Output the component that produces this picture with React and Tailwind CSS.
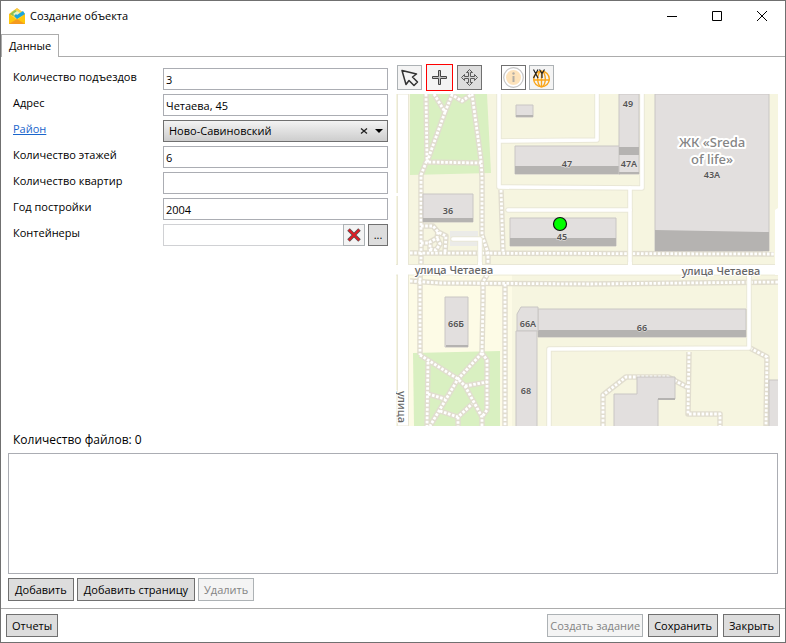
import React, { useState } from 'react';

const BUTTON = 'h-[23px] border border-[#707070] bg-[#dddddd] leading-5 whitespace-nowrap';
const BUTTON_OFF = 'h-[23px] border border-[#adb2b5] bg-[#f4f4f4] leading-5 whitespace-nowrap text-[#838383]';
const INPUT = 'h-[22px] w-full border border-[#abadb3] bg-white px-[2px] outline-none';

// Пешеходные дорожки
const footpaths = [
  'M426 94L427 160L421 175L421 262L420 280L420 355',
  'M434 94L445 112L452 95L462 101L472 94L481 160L482 177L482 235L488 253L488 265',
  'M445 112L427 162L481 163',
  'M487 275L483 282L483 300L482 353',
  'M410 253L774 254',
  'M410 281L440 283L590 284L778 282',
  'M501 190L503 252',
  'M505 284L505 426',
  'M421 226L433 226L438 232L446 236L445 252',
  'M438 232L437 238L430 242L430 249L436 250L440 244L437 238M421 243L430 243M430 249L431 253',
  'M420 355L458 379L465 386L482 417L482 426',
  'M482 353L458 379L430 426',
  'M428 362L427 426',
  'M482 353L487 360L487 410L482 417',
  'M465 386L487 382',
  'M428 394L445 399',
  'M440 411L458 417L472 404M458 417L458 426',
  'M603 426L603 395L626 377L668 377L687 387',
  'M689 352L688 414L720 414L720 426',
  'M750 348L767 357L766 426',
];

// Проезды
const roads = [
  'M499 94L499 187L642 188L642 94',
  'M499 141L597 140L597 94',
  'M630 188L630 267',
  'M508 210L630 210',
  'M453 239L480 239L480 267',
  'M749 272L749 348L549 349L549 426',
];

const buildings = [
  { d: 'M516 105H533V117H516Z', shade: 'M516 115H533V117H516Z' },
  { d: 'M515 146H620V174H515Z', shade: 'M515 166H620V174H515Z' },
  { d: 'M619 94H639V174H619Z', shade: 'M619 147H639V155H619ZM619 172H639V174H619Z' },
  { d: 'M655 94H769V251H655Z', shade: 'M655 230L769 232V251H655Z' },
  { d: 'M423 194H473V222H423Z', shade: 'M423 218H473V222H423Z' },
  { d: 'M510 218H616V246H510Z', shade: 'M510 238H616V246H510Z' },
  { d: 'M445 297H468V347H445Z', shade: 'M446 345H468V347H446Z' },
  { d: 'M538 309H746V337H538Z', shade: 'M538 330H746V337H538Z' },
  { d: 'M517 331V314L521 307H538V331Z' },
  { d: 'M516 331H537V428H516Z' },
  { d: 'M637 377H675V399H658V428H614V394H637Z', shade: 'M658 398H675V400H658Z' },
  { d: 'M769 380H780V428H769Z' },
];

const houseLabels = [
  { x: 628, y: 107, text: '49' },
  { x: 567, y: 167, text: '47' },
  { x: 629, y: 167, text: '47А' },
  { x: 712, y: 178, text: '43А' },
  { x: 448, y: 214, text: '36' },
  { x: 562, y: 240, text: '45' },
  { x: 456, y: 327, text: '66Б' },
  { x: 528, y: 327, text: '66А' },
  { x: 642, y: 331, text: '66' },
  { x: 526, y: 394, text: '68' },
];

function AppIcon() {
  return (
    <svg viewBox="0 0 16 16" className="size-4" aria-hidden="true">
      <path d="M0 6L8 0L16 6V16H0Z" fill="#f7b423" />
      <path d="M2 4L8 1L14 4V10L8 13L2 10Z" fill="#fdd94b" />
      <path d="M1 6L6 2L9 4L4 8Z" fill="#8cc152" />
      <path d="M4 6L8 3L11 5L7 8Z" fill="#e8f3c8" />
      <path d="M0 6L8 12L16 6V16H0Z" fill="#fdc70c" />
      <path d="M0 16L8 11L16 16Z" fill="#f59a1f" />
      <path d="M5 8L7 6L8 7L14 3L16 6L8 11Z" fill="#1ba5dc" />
    </svg>
  );
}

function CityMap() {
  return (
    <svg viewBox="396 94 382 332" className="block w-full" role="img" aria-label="Карта">
      <rect x="396" y="94" width="382" height="332" fill="#f6f5e0" />
      <path d="M409 275H512V426H409Z" fill="#fdfbe6" />
      <path d="M410 94H487L491 173L410 175Z" fill="#d9f0c1" />
      <path d="M413 353L500 351V426H414Z" fill="#d9f0c1" />
      <path d="M450 231H478V246H450Z" fill="#ebebe8" />

      <g fill="none" strokeLinejoin="round">
        {footpaths.map((d) => (
          <path key={d} d={d} stroke="#e1ddcf" strokeWidth="5.5" />
        ))}
        {footpaths.map((d) => (
          <path key={d} d={d} stroke="#ffffff" strokeWidth="2.8" strokeDasharray="2.6 1.6" />
        ))}
        {roads.map((d) => (
          <path key={d} d={d} stroke="#e9e7d6" strokeWidth="5.5" strokeLinecap="round" />
        ))}
        {roads.map((d) => (
          <path key={d} d={d} stroke="#ffffff" strokeWidth="3.6" strokeLinecap="round" />
        ))}
      </g>

      <path d="M397.500 94H408.500V426H397.500Z" fill="#fff" stroke="#e9e7d6" />
      <path d="M396 193H400V196H396Z" fill="#fff" />
      <path d="M396 264.500H778M396 275H778" stroke="#e9e7d6" />
      <path d="M396 265H778V274.500H396Z" fill="#fff" />
      <path d="M775 210L778 208V275H775Z" fill="#fff" />
      <path d="M398 262H408V277H398ZM628 262H632V268H628ZM747 272H751V278H747ZM478 262H482V268H478Z" fill="#fff" />

      {buildings.map((b) => (
        <g key={b.d}>
          <path d={b.d} fill="#e2dfde" stroke="#c9c6c4" />
          {b.shade && <path d={b.shade} fill="#b5b3b1" />}
        </g>
      ))}

      <g
        fontFamily="'Noto Sans', 'Open Sans', sans-serif"
        textAnchor="middle"
        fill="#555555"
        stroke="#e9e7e5"
        strokeWidth="1"
        paintOrder="stroke"
      >
        <g fontSize="9" fontWeight="600">
          {houseLabels.map((h) => (
            <text key={h.text} x={h.x} y={h.y}>{h.text}</text>
          ))}
        </g>
        <g fontSize="11" fontWeight="500" fill="#666666" stroke="#ffffff" strokeWidth="2">
          <text x="454" y="274">улица Четаева</text>
          <text x="721" y="275">улица Четаева</text>
          <text transform="translate(398 391) rotate(90)" textAnchor="start">улица</text>
        </g>
        <g fontSize="13" fontWeight="500" fill="#858585" stroke="#ffffff" strokeWidth="4" strokeLinejoin="round">
          <text x="712" y="147">ЖК «Sreda</text>
          <text x="712" y="164">of life»</text>
        </g>
      </g>

      <circle cx="560" cy="224" r="6.5" fill="#00ff00" stroke="#111111" strokeWidth="1.2" />
    </svg>
  );
}

function MapToolbar() {
  return (
    <div className="flex h-[27px] items-center pl-px">
      <button aria-label="Выбор" className="flex size-[25px] items-center justify-center border border-[#adb2b5] bg-[#f4f4f4]">
        <svg viewBox="0 0 23 23" className="size-[23px]" fill="none" stroke="#333333" strokeWidth="1.5" strokeLinejoin="round">
          <path d="M4 4.500L18.500 8L14.500 11L19.500 16L16 19.500L11 14.500L8 18.500Z" />
        </svg>
      </button>
      <button aria-label="Добавить точку" className="ml-1 flex size-[27px] items-center justify-center border border-[#ff0000] bg-[#f4f4f4]">
        <svg viewBox="0 0 23 23" className="size-[23px]" fill="#c4c4c4" stroke="#444444">
          <path d="M10.500 4.500H12.500V10.500H18.500V12.500H12.500V18.500H10.500V12.500H4.500V10.500H10.500Z" />
        </svg>
      </button>
      <button aria-label="Переместить" className="ml-1 flex size-[25px] items-center justify-center border border-[#707070] bg-[#dddddd]">
        <svg viewBox="0 0 23 23" className="size-[23px]" fill="#d4d4d4" stroke="#4c4c4c" strokeWidth="0.9" strokeLinejoin="round">
          <path d="M11.500 3.500L14.500 6.500H12.500V10.500H16.500V8.500L19.500 11.500L16.500 14.500V12.500H12.500V16.500H14.500L11.500 19.500L8.500 16.500H10.500V12.500H6.500V14.500L3.500 11.500L6.500 8.500V10.500H10.500V6.500H8.500Z" />
        </svg>
      </button>
      <button aria-label="Информация" className="ml-[19px] flex size-[25px] items-center justify-center border border-[#707070] bg-white">
        <svg viewBox="0 0 23 23" className="size-[23px]">
          <circle cx="11.500" cy="11.500" r="9.800" fill="#ffffff" stroke="#c6c6c6" strokeWidth="1.200" />
          <circle cx="11.500" cy="11.500" r="7.500" fill="#fde3bb" />
          <circle cx="11.500" cy="7.500" r="1.200" fill="#b3aea5" />
          <path d="M10.500 10H12.500V16H10.500Z" fill="#b3aea5" />
        </svg>
      </button>
      <button aria-label="Координаты" className="ml-[3px] flex size-[25px] items-center justify-center border border-[#adb2b5] bg-[#f4f4f4]">
        <svg viewBox="0 0 23 23" className="size-[23px]">
          <g fill="none" stroke="#f9a51a" strokeWidth="1.400">
            <circle cx="11.500" cy="13" r="7.800" />
            <ellipse cx="11.500" cy="13" rx="3.800" ry="7.800" />
            <path d="M3.500 14H19.500M11.500 5V21" />
          </g>
          <path d="M3.500 3.500L8 12M8 3.500L3.500 12M9.500 3.500L12 7.500L14.500 3.500M12 7.500V12" fill="none" stroke="#222222" strokeWidth="1.200" />
        </svg>
      </button>
    </div>
  );
}

function Field({ id, label, children }) {
  return (
    <div className="flex items-start">
      <label htmlFor={id} className="w-[154px] shrink-0 pl-[4px] leading-[18px]">{label}</label>
      <div className="w-[225px]">{children}</div>
    </div>
  );
}

export default function App() {
  const [form, setForm] = useState({
    entrances: '3',
    address: 'Четаева, 45',
    district: 'Ново-Савиновский',
    floors: '6',
    flats: '',
    year: '2004',
  });

  const bind = (name) => ({
    id: name,
    value: form[name],
    onChange: (e) => setForm({ ...form, [name]: e.target.value }),
  });

  return (
    <div className="flex min-h-screen flex-col border border-[#707070] bg-white font-['Open_Sans','Noto_Sans',sans-serif] text-[11px] text-black">
      <header className="flex h-[33px] items-center pb-1">
        <div className="flex items-center gap-[5px] pl-2">
          <AppIcon />
          <h1 className="leading-4">Создание объекта</h1>
        </div>
        <div className="ml-auto flex">
          <button aria-label="Свернуть" className="flex h-7 w-[46px] items-center justify-center">
            <svg viewBox="0 0 10 10" className="size-[10px]" stroke="#000"><path d="M0 5.500H10" /></svg>
          </button>
          <button aria-label="Развернуть" className="flex h-7 w-[44px] items-center justify-center">
            <svg viewBox="0 0 10 10" className="size-[10px]" fill="none" stroke="#000"><path d="M0.500 0.500H9.500V9.500H0.500Z" /></svg>
          </button>
          <button aria-label="Закрыть окно" className="flex h-7 w-[46px] items-center justify-center">
            <svg viewBox="0 0 10 10" className="size-[10px]" stroke="#000"><path d="M0 0L10 10M10 0L0 10" /></svg>
          </button>
        </div>
      </header>

      <nav className="flex h-[23px]">
        <button className="border-x border-t border-[#acacac] px-[7px] leading-[22px]">Данные</button>
        <div className="flex-1 border-b border-[#acacac]" />
      </nav>

      <main className="flex flex-1 flex-col px-[7px] pt-[7px] pb-[7px]">
        <div className="flex items-start gap-2">
          <div className="flex shrink-0 flex-col gap-1 pt-1 pl-px">
            <Field id="entrances" label="Количество подъездов">
              <input className={INPUT} {...bind('entrances')} />
            </Field>
            <Field id="address" label="Адрес">
              <input className={INPUT} {...bind('address')} />
            </Field>
            <Field id="district" label={<a href="#district" className="text-[#1a66cc] underline">Район</a>}>
              <div className="relative h-[22px]">
                <select
                  className="h-[22px] w-full appearance-none border border-[#707070] bg-linear-to-b from-[#f3f3f3] to-[#cdcdcd] px-[5px] outline-none"
                  {...bind('district')}
                >
                  <option>Ново-Савиновский</option>
                  <option value="">{''}</option>
                </select>
                <button
                  aria-label="Очистить"
                  className="absolute top-[7px] right-[20px]"
                  onClick={() => setForm({ ...form, district: '' })}
                >
                  <svg viewBox="0 0 8 8" className="size-2" stroke="#222222" strokeWidth="1.3"><path d="M1 1.500L7 6.500M7 1.500L1 6.500" /></svg>
                </button>
                <svg viewBox="0 0 8 4" className="pointer-events-none absolute top-[9px] right-[5px] h-1 w-2"><path d="M0 0H8L4 4Z" /></svg>
              </div>
            </Field>
            <Field id="floors" label="Количество этажей">
              <input className={INPUT} {...bind('floors')} />
            </Field>
            <Field id="flats" label="Количество квартир">
              <input className={INPUT} {...bind('flats')} />
            </Field>
            <Field id="year" label="Год постройки">
              <input className={INPUT} {...bind('year')} />
            </Field>
            <Field id="containers" label="Контейнеры">
              <div className="flex">
                <input id="containers" readOnly className="h-[22px] min-w-0 flex-1 border border-r-0 border-[#d0d1d4] bg-white px-[2px] outline-none" />
                <button aria-label="Очистить контейнеры" className="flex h-[22px] w-[22px] items-center justify-center border border-[#adb2b5] bg-[#f4f4f4]">
                  <svg viewBox="0 0 14 14" className="size-[14px]">
                    <path d="M1.500 1.500L12.500 12.500M12.500 1.500L1.500 12.500" stroke="#555555" strokeWidth="3.600" />
                    <path d="M1.800 1.800L12.200 12.200M12.200 1.800L1.800 12.200" stroke="#e01b24" strokeWidth="2" />
                  </svg>
                </button>
                <button aria-label="Выбрать контейнеры" className="ml-[3px] h-[22px] w-5 border border-[#707070] bg-[#dddddd] leading-5">...</button>
              </div>
            </Field>
          </div>

          <section className="min-w-0 flex-1">
            <MapToolbar />
            <div className="pt-[3px]">
              <CityMap />
            </div>
          </section>
        </div>

        <p className="pt-[5px] pb-1 pl-[5px] text-[12px] leading-[18px]">Количество файлов: 0</p>
        <div className="min-h-[121px] flex-1 border border-[#abadb3]" />
        <div className="flex gap-[3px] pt-1">
          <button className={`${BUTTON} px-[6px]`}>Добавить</button>
          <button className={`${BUTTON} px-[6px]`}>Добавить страницу</button>
          <button className={`${BUTTON_OFF} px-[5px]`} disabled>Удалить</button>
        </div>
      </main>

      <footer className="flex items-center gap-[5px] border-t border-[#acacac] p-[5px]">
        <button className={`${BUTTON} px-[5px]`}>Отчеты</button>
        <button className={`${BUTTON_OFF} ml-auto px-[2px]`} disabled>Создать задание</button>
        <button className={`${BUTTON} px-[5px]`}>Сохранить</button>
        <button className={`${BUTTON} px-[5px]`}>Закрыть</button>
      </footer>
    </div>
  );
}
